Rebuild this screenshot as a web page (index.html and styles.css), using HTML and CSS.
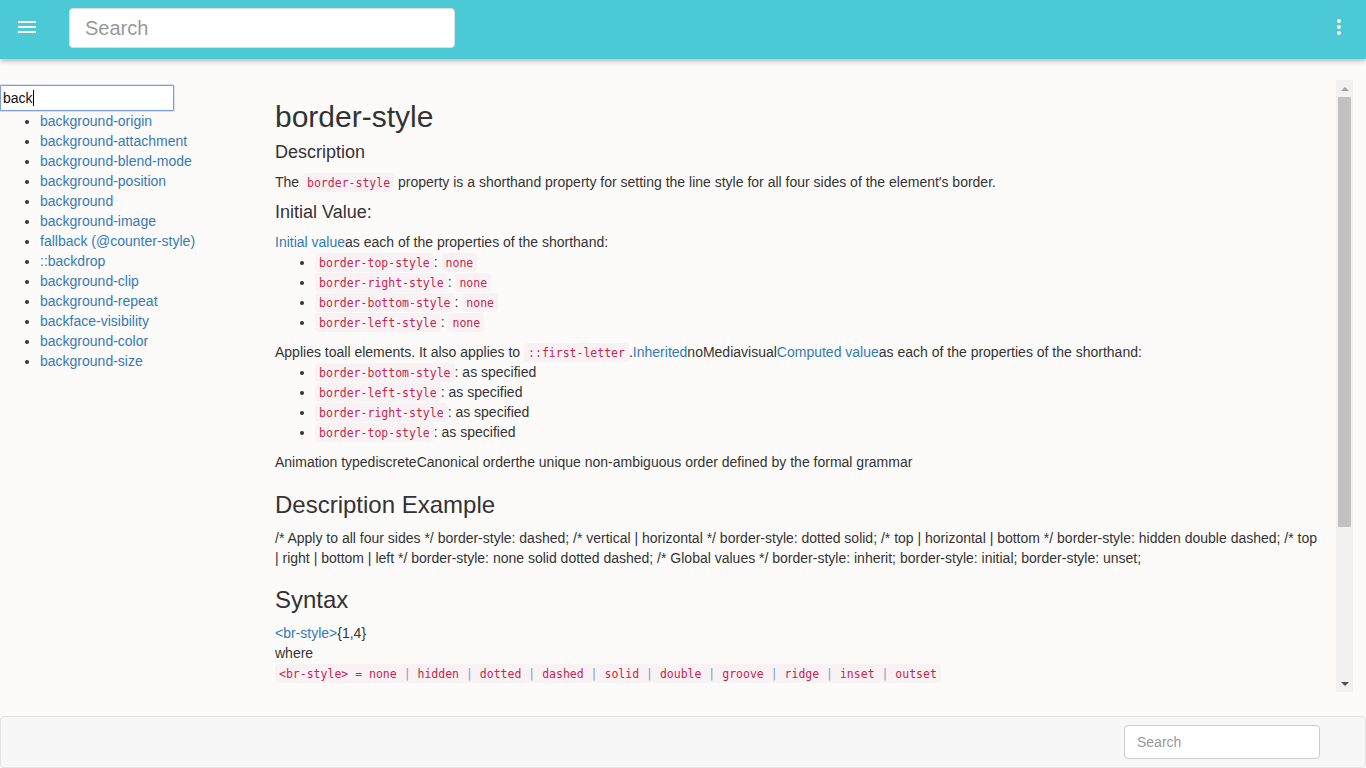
FILE: index.html
```html
<!DOCTYPE html>
<html lang="en">
<head>
<meta charset="utf-8">
<title>border-style</title>
<link rel="stylesheet" href="styles.css">
</head>
<body>
<header class="topbar">
  <button class="icon-btn menu-btn" aria-label="Menu">
    <svg width="18" height="12" viewBox="0 0 18 12"><rect x="0" y="0" width="18" height="2" fill="#fff"/><rect x="0" y="5" width="18" height="2" fill="#fff"/><rect x="0" y="10" width="18" height="2" fill="#fff"/></svg>
  </button>
  <div class="top-search">Search</div>
  <div class="spacer"></div>
  <button class="icon-btn kebab-btn" aria-label="More">
    <svg width="6" height="16" viewBox="0 0 6 16"><circle cx="3" cy="2" r="2" fill="#fff"/><circle cx="3" cy="8" r="2" fill="#fff"/><circle cx="3" cy="14" r="2" fill="#fff"/></svg>
  </button>
</header>

<div class="layout">
  <aside class="sidebar">
    <div class="filter">back<span class="caret"></span></div>
    <ul class="results">
      <li><a href="#">background-origin</a></li>
      <li><a href="#">background-attachment</a></li>
      <li><a href="#">background-blend-mode</a></li>
      <li><a href="#">background-position</a></li>
      <li><a href="#">background</a></li>
      <li><a href="#">background-image</a></li>
      <li><a href="#">fallback (@counter-style)</a></li>
      <li><a href="#">::backdrop</a></li>
      <li><a href="#">background-clip</a></li>
      <li><a href="#">background-repeat</a></li>
      <li><a href="#">backface-visibility</a></li>
      <li><a href="#">background-color</a></li>
      <li><a href="#">background-size</a></li>
    </ul>
  </aside>

  <main class="viewer">
    <div class="doc">
      <h1>border-style</h1>
      <h4>Description</h4>
      <p>The <code>border-style</code> property is a shorthand property for setting the line style for all four sides of the element′s border.</p>
      <h4 class="iv">Initial Value:</h4>
      <p class="tight"><a href="#">Initial value</a>as each of the properties of the shorthand:</p>
      <ul class="props">
        <li><code>border-top-style</code>: <code>none</code></li>
        <li><code>border-right-style</code>: <code>none</code></li>
        <li><code>border-bottom-style</code>: <code>none</code></li>
        <li><code>border-left-style</code>: <code>none</code></li>
      </ul>
      <p class="tight">Applies toall elements. It also applies to <code>::first-letter</code>.<a href="#">Inherited</a>noMediavisual<a href="#">Computed value</a>as each of the properties of the shorthand:</p>
      <ul class="props">
        <li><code>border-bottom-style</code>: as specified</li>
        <li><code>border-left-style</code>: as specified</li>
        <li><code>border-right-style</code>: as specified</li>
        <li><code>border-top-style</code>: as specified</li>
      </ul>
      <p>Animation typediscreteCanonical orderthe unique non-ambiguous order defined by the formal grammar</p>
      <h3 class="ex">Description Example</h3>
      <p>/* Apply to all four sides */ border-style: dashed; /* vertical | horizontal */ border-style: dotted solid; /* top | horizontal | bottom */ border-style: hidden double dashed; /* top | right | bottom | left */ border-style: none solid dotted dashed; /* Global values */ border-style: inherit; border-style: initial; border-style: unset;</p>
      <h3 class="syn">Syntax</h3>
      <div class="line"><a href="#">&lt;br-style&gt;</a>{1,4}</div>
      <div class="line">where</div>
      <div class="line"><code class="grammar">&lt;br-style&gt; = none <span class="bar">|</span> hidden <span class="bar">|</span> dotted <span class="bar">|</span> dashed <span class="bar">|</span> solid <span class="bar">|</span> double <span class="bar">|</span> groove <span class="bar">|</span> ridge <span class="bar">|</span> inset <span class="bar">|</span> outset</code></div>
    </div>
    <div class="scrollbar">
      <div class="sb-btn"><span class="tri up"></span></div>
      <div class="sb-track"><div class="sb-thumb"></div></div>
      <div class="sb-btn"><span class="tri down"></span></div>
    </div>
  </main>
</div>

<footer class="footbar">
  <div class="foot-search">Search</div>
</footer>
</body>
</html>
```
FILE: styles.css
```css
* { box-sizing: border-box; }
html, body { margin: 0; padding: 0; height: 100%; overflow: hidden; }
body {
  background: #fcfbfa;
  font-family: "Liberation Sans", Arial, sans-serif;
  font-size: 14px;
  line-height: 20px;
  color: #333;
  display: flex;
  flex-direction: column;
}
a { color: #337ab7; text-decoration: none; }

.topbar {
  height: 59px;
  flex: 0 0 59px;
  background: #4bcad5;
  display: flex;
  align-items: flex-start;
  box-shadow: 0 2px 5px rgba(0,0,0,0.28);
  position: relative;
  z-index: 2;
}
.icon-btn {
  background: none;
  border: 0;
  padding: 0;
  display: flex;
  align-items: center;
  justify-content: center;
}
.menu-btn { width: 18px; height: 12px; margin-left: 18px; margin-top: 21px; }
.top-search {
  margin-left: 33px;
  margin-top: 8px;
  width: 386px;
  height: 40px;
  background: #fff;
  border: 1px solid #d9dfe0;
  border-radius: 4px;
  font-size: 20px;
  line-height: 38px;
  color: #999;
  padding-left: 15px;
}
.spacer { flex: 1; }
.kebab-btn { width: 6px; height: 16px; margin-right: 24px; margin-top: 19px; }

.layout {
  flex: 0 0 auto;
  display: flex;
  padding-top: 21px;
  height: 657px;
}
.sidebar { width: 260px; flex: 0 0 260px; padding-top: 5px; }
.filter {
  width: 174px;
  height: 26px;
  border: 1px solid #7a9fdc;
  border-radius: 1px;
  background: #fff;
  color: #111;
  font-size: 14px;
  line-height: 24px;
  padding-left: 2px;
  box-shadow: 0 0 0 0.5px #aec4ea;
}
.caret {
  display: inline-block;
  width: 1px;
  height: 16px;
  background: #000;
  vertical-align: -3px;
}
.results { margin: 0; padding-left: 40px; list-style: disc; }
.results li { line-height: 20px; }

.viewer {
  flex: 0 0 auto;
  width: 1106px;
  height: 612px;
  display: flex;
  overflow: hidden;
}
.doc {
  flex: 1;
  padding: 0 15px;
  overflow: hidden;
}
.doc h1 {
  font-size: 30px;
  font-weight: 400;
  line-height: 34px;
  margin: 20px 0 8px;
}
.doc h4 {
  font-size: 18px;
  font-weight: 400;
  line-height: 20px;
  margin: 0 0 10px;
}
.doc h4.iv { margin-top: 7px; }
.doc h3 {
  font-size: 24px;
  font-weight: 400;
  line-height: 26px;
  margin: 20px 0 10px;
}
.doc h3.ex { margin-top: 20px; }
.doc h3.syn { margin-top: 19px; }
.doc p { margin: 0 0 10px; }
.doc p.tight { margin: 0; }
.doc ul.props { margin: 0 0 10px; padding-left: 40px; }
.doc ul.props li { line-height: 20px; }
.line { line-height: 20px; }

code {
  font-family: "DejaVu Sans Mono", "Liberation Mono", monospace;
  font-size: 11.5px;
  line-height: 1;
  color: #c7254e;
  background: #f9f2f4;
  padding: 3px 4px 2px;
  border-radius: 4px;
}
code .bar { color: #7f96c8; }

.scrollbar {
  flex: 0 0 17px;
  width: 17px;
  margin-right: 13px;
  background: #f1f1f1;
  display: flex;
  flex-direction: column;
}
.sb-btn {
  height: 17px;
  flex: 0 0 17px;
  display: flex;
  align-items: center;
  justify-content: center;
}
.tri { width: 0; height: 0; border-left: 4px solid transparent; border-right: 4px solid transparent; }
.tri.up { border-bottom: 4px solid #a3a3a3; }
.tri.down { border-top: 4px solid #505050; }
.sb-track { flex: 1; padding: 0 2px; }
.sb-thumb { height: 430px; background: #c1c1c1; }

.footbar {
  margin-top: auto;
  height: 52px;
  flex: 0 0 52px;
  background: #f7f7f7;
  border: 1px solid #e4e4e4;
  border-radius: 4px;
  display: flex;
  align-items: center;
  justify-content: flex-end;
  padding-right: 45px;
}
.foot-search {
  width: 196px;
  height: 34px;
  background: #fff;
  border: 1px solid #ccc;
  border-radius: 4px;
  color: #999;
  font-size: 14px;
  line-height: 32px;
  padding-left: 12px;
}
```
